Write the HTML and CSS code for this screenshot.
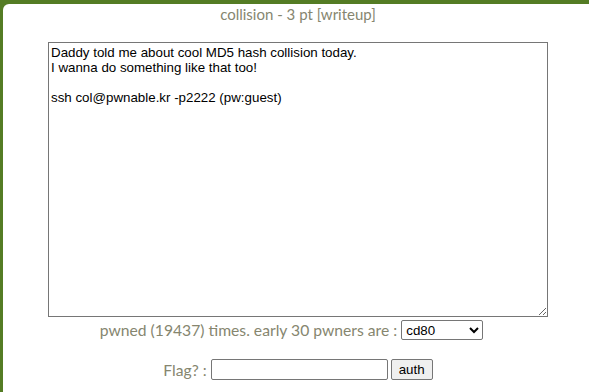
FILE: index.html
```html
<!DOCTYPE html>
<html>
<head>
<meta charset="utf-8">
<link rel="stylesheet" href="styles.css">
</head>
<body>
<div class="panel">
  <div class="title">collision - 3 pt [writeup]</div>
  <textarea class="desc" readonly>Daddy told me about cool MD5 hash collision today.
I wanna do something like that too!

ssh col@pwnable.kr -p2222 (pw:guest)</textarea>
  <div class="row pwn">pwned (19437) times. early 30 pwners are : <select class="sel"><option>cd80</option></select></div>
  <div class="row flag">Flag? : <input class="inp" type="text"> <button class="btn">auth</button></div>
</div>
</body>
</html>
```

FILE: styles.css
```css
html, body {
  margin: 0;
  padding: 0;
  overflow: hidden;
  height: 392px;
}
body {
  background: #547c24;
}
.panel {
  margin: 4px 0 0 3px;
  width: 590px;
  height: 400px;
  background: #ffffff;
  border-top-left-radius: 6px;
  text-align: center;
  font-family: Lato, "Open Sans", sans-serif;
  color: #86866f;
  display: flex;
  flex-direction: column;
  align-items: center;
}
.title {
  font-size: 15px;
  line-height: 20px;
  margin-top: 0px;
}
.desc {
  margin-top: 18px;
  width: 500px;
  height: 275px;
  box-sizing: border-box;
  border: 1px solid #767676;
  padding: 2px;
  font-family: "Liberation Sans", Arial, sans-serif;
  font-size: 13.33px;
  line-height: 15px;
  color: #000;
  resize: both;
  outline: none;
}
.row {
  font-size: 15.7px;
  display: flex;
  align-items: center;
  gap: 4px;
}
.pwn {
  margin-top: 3px;
  padding-right: 13px;
}
.flag {
  margin-top: 19px;
}
.sel {
  width: 82px;
  height: 20px;
  font-family: "Liberation Sans", Arial, sans-serif;
  font-size: 13.33px;
  border: 1px solid #767676;
  border-radius: 2px;
  background: #fff;
  color: #000;
}
.inp {
  width: 177px;
  height: 21px;
  box-sizing: border-box;
  border: 1px solid #767676;
  border-radius: 2px;
  margin-left: 0;
}
.btn {
  height: 21px;
  font-family: "Liberation Sans", Arial, sans-serif;
  font-size: 13.33px;
  border: 1px solid #767676;
  border-radius: 2px;
  background: #efefef;
  color: #000;
  padding: 0 7px;
  margin-left: -1px;
}
```
